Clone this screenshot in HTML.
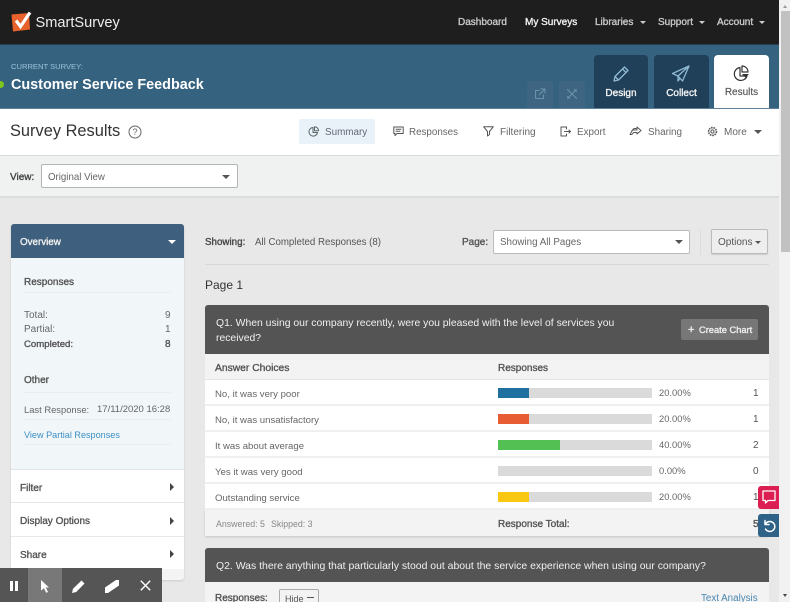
<!DOCTYPE html>
<html><head><meta charset="utf-8"><style>
html,body{margin:0;padding:0;width:790px;height:602px;overflow:hidden;background:#e8e8e8}
body{position:relative;font-family:"Liberation Sans",sans-serif;font-size:10px;color:#555}
div,span.a,svg{position:absolute}
.t{position:absolute;white-space:nowrap;line-height:14px;transform:translateY(1px)}
.t.n{transform:none}
.b{font-weight:normal;-webkit-text-stroke:.35px}
.tri{position:absolute;width:0;height:0;border-left:4px solid transparent;border-right:4px solid transparent;border-top:4px solid #555}
.rtri{position:absolute;width:0;height:0;border-top:4px solid transparent;border-bottom:4px solid transparent;border-left:4px solid #444}
.row{position:absolute;left:205px;width:564px;height:24px;background:#fff;border-bottom:2px solid #f0f0f0}
.bar{position:absolute;left:498px;width:154px;height:10px;background:#dadada}
.fill{position:absolute;left:498px;height:10px}
.ic{fill:none;stroke-linecap:round;stroke-linejoin:round}
</style></head><body>
<!-- nav -->
<div style="left:0;top:0;width:779px;height:44px;background:#1e1e1e"></div>
<div style="left:0;top:44px;width:779px;height:1px;background:#2a3f4e"></div>
<svg style="left:10px;top:11px" width="22" height="22" viewBox="0 0 22 22"><path d="M1.500 3.500L19 2 20 18.500 3 20.500Z" fill="#e8622c"/><path d="M6 9.500L10.500 15.500 20 1.500" fill="none" stroke="#fff" stroke-width="3.200"/></svg>
<div class="t n" style="left:35.500px;top:14px;font-size:14.600px;line-height:18px;color:#eee">SmartSurvey</div>
<div class="t b" style="left:458px;top:15px;font-size:10px;color:#c8c8c8">Dashboard</div>
<div class="t b" style="left:525px;top:15px;font-size:10px;color:#f2f2f2">My Surveys</div>
<div class="t b" style="left:595px;top:15px;font-size:10px;color:#c8c8c8">Libraries</div>
<div class="tri" style="left:640px;top:21px;border-top:3px solid #ccc;border-left-width:3px;border-right-width:3px"></div>
<div class="t b" style="left:658px;top:15px;font-size:10px;color:#c8c8c8">Support</div>
<div class="tri" style="left:699px;top:21px;border-top:3px solid #ccc;border-left-width:3px;border-right-width:3px"></div>
<div class="t b" style="left:717px;top:15px;font-size:10px;color:#c8c8c8">Account</div>
<div class="tri" style="left:759px;top:21px;border-top:3px solid #ccc;border-left-width:3px;border-right-width:3px"></div>
<!-- header -->
<div style="left:0;top:45px;width:779px;height:63px;background:#35627f"></div>
<div class="t n" style="left:11px;top:60px;font-size:7.600px;color:#9cc3dc">CURRENT SURVEY:</div>
<div class="t" style="left:11px;top:75px;font-weight:bold;font-size:14.400px;line-height:18px;color:#fff">Customer Service Feedback</div>
<div style="left:-3px;top:81px;width:7px;height:7px;border-radius:50%;background:#7ec51e"></div>
<div style="left:527px;top:81px;width:26px;height:27px;background:#3e6682;border-radius:3px 3px 0 0"></div>
<div style="left:559px;top:81px;width:26px;height:27px;background:#3e6682;border-radius:3px 3px 0 0"></div>
<svg style="left:534px;top:88px" width="12" height="12" viewBox="0 0 12 12"><path class="ic" stroke="#6d93ab" d="M9.500 7v3.500h-8v-8H5M7 1h4v4M11 1L5.500 6.500"/></svg>
<svg style="left:566px;top:88px" width="12" height="12" viewBox="0 0 12 12"><path class="ic" stroke="#6d93ab" d="M1.500 1.500L10.500 10.500M10.500 1.500L1.500 10.500M8.500 1.500l2 2M1.500 8.500l2 2"/></svg>
<div style="left:594px;top:55px;width:54px;height:53px;background:#204059;border-radius:4px 4px 0 0"></div>
<div style="left:654px;top:55px;width:55px;height:53px;background:#204059;border-radius:4px 4px 0 0"></div>
<div style="left:714px;top:55px;width:55px;height:54px;background:#fff;border-radius:4px 4px 0 0"></div>
<svg style="left:612px;top:65px" width="18" height="18" viewBox="0 0 18 18"><path class="ic" stroke="#8fb9d3" stroke-width="1.300" d="M2 16l1-4.500L12.500 2l3.500 3.500L6.500 15ZM10.500 4l3.500 3.500M3 11.500L6.500 15"/></svg>
<svg style="left:671px;top:64px" width="20" height="19" viewBox="0 0 20 19"><path class="ic" stroke="#8fb9d3" stroke-width="1.300" d="M18 2L1.500 9.500 7 12l4.500 5L18 2ZM18 2L7 12v5l2-2.500"/></svg>
<svg style="left:732px;top:65px" width="18" height="17" viewBox="0 0 18 17"><path class="ic" stroke="#333" stroke-width="1.200" d="M8 2.500A6.500 6.500 0 1 0 15 11H8ZM10 1a6 6 0 0 1 6 6h-6Z"/><path d="M10 9h7l-3.500 3.500Z" fill="#333"/></svg>
<div class="t b" style="left:594px;top:86px;width:54px;text-align:center;font-size:10px;color:#f3f3f3">Design</div>
<div class="t b" style="left:654px;top:86px;width:55px;text-align:center;font-size:10px;color:#f3f3f3">Collect</div>
<div class="t" style="left:714px;top:85px;width:55px;text-align:center;font-size:10px;color:#555;-webkit-text-stroke:.15px">Results</div>
<!-- subheader -->
<div style="left:0;top:108px;width:779px;height:47px;background:#fff;border-top:1px solid #5d7f97;box-sizing:border-box"></div>
<div style="left:0;top:155px;width:779px;height:1px;background:#d8d8d8"></div>
<div class="t n" style="left:10px;top:122px;font-size:16.400px;line-height:19px;color:#333">Survey Results</div>
<svg style="left:128px;top:125px" width="14" height="14" viewBox="0 0 14 14"><circle cx="7" cy="7" r="6" fill="none" stroke="#666"/><text x="7" y="10" text-anchor="middle" font-size="9" fill="#666" font-family="Liberation Sans">?</text></svg>
<div style="left:299px;top:119px;width:76px;height:25px;background:#e9f2f8;border-radius:2px"></div>
<svg style="left:308px;top:126px" width="11" height="11" viewBox="0 0 11 11"><path class="ic" stroke="#566" d="M5 1.500A4.300 4.300 0 1 0 9.500 6.500H5ZM6.500.7a4 4 0 0 1 4 4h-4Z"/></svg>
<div class="t" style="left:325px;top:125px;font-size:9.900px;color:#667">Summary</div>
<svg style="left:393px;top:126px" width="11" height="11" viewBox="0 0 11 11"><path class="ic" stroke="#555" d="M.8 1h9.400v6.500H4l-2 2v-2H.8ZM3 3.200h5M3 5.200h4"/></svg>
<div class="t" style="left:409px;top:125px;font-size:9.800px;color:#666">Responses</div>
<svg style="left:483px;top:126px" width="11" height="11" viewBox="0 0 11 11"><path class="ic" stroke="#555" d="M.7.8h9.600L6.500 5.500v3L4.500 10V5.500Z"/></svg>
<div class="t" style="left:500px;top:125px;font-size:10px;color:#666">Filtering</div>
<svg style="left:560px;top:126px" width="12" height="11" viewBox="0 0 12 11"><path class="ic" stroke="#555" d="M6.500 3V1H1v9h5.500V8M4.500 5.500h6M9 4l1.500 1.500L9 7"/></svg>
<div class="t" style="left:577px;top:125px;font-size:9.900px;color:#666">Export</div>
<svg style="left:629px;top:126px" width="13" height="11" viewBox="0 0 13 11"><path class="ic" stroke="#555" d="M8 1l4 3.500L8 8V6.500H4.500L3 8.500H1L3.500 4H8ZM3 4.500L5 2.500h2"/></svg>
<div class="t" style="left:648px;top:125px;font-size:9.900px;color:#666">Sharing</div>
<svg style="left:707px;top:126px" width="11" height="11" viewBox="0 0 11 11"><circle cx="5.500" cy="5.500" r="1.600" fill="none" stroke="#555"/><circle cx="5.500" cy="5.500" r="3.900" fill="none" stroke="#555" stroke-width="1.600" stroke-dasharray="1.600 .8"/></svg>
<div class="t" style="left:724px;top:125px;font-size:10px;color:#666">More</div>
<div class="tri" style="left:754px;top:130px"></div>
<!-- view bar -->
<div style="left:0;top:156px;width:779px;height:40px;background:#f0f1f1"></div>
<div style="left:0;top:196px;width:779px;height:2px;background:#dcdcdc"></div>
<div class="t b" style="left:10px;top:170px;font-size:10px;color:#444">View:</div>
<div style="left:41px;top:164px;width:197px;height:24px;box-sizing:border-box;background:#fff;border:1px solid #b5b5b5;border-radius:2px"></div>
<div class="t" style="left:48px;top:170px;font-size:9.700px;color:#666">Original View</div>
<div class="tri" style="left:222px;top:175px"></div>
<!-- sidebar -->
<div style="left:11px;top:224px;width:173px;height:356px;background:#f4f4f4;border-radius:3px;box-shadow:0 1px 2px #ccc"></div>
<div style="left:11px;top:469px;width:173px;height:100px;background:#fff"></div>
<div style="left:11px;top:224px;width:173px;height:34px;background:#3e5f7d;border-radius:3px 3px 0 0"></div>
<div class="t b" style="left:20px;top:235px;font-size:9.800px;color:#f0f0f0">Overview</div>
<div class="tri" style="left:168px;top:240px;border-top-color:#fff"></div>
<div style="left:11px;top:258px;width:173px;height:211px;background:#f1f6f9;border-bottom:1px solid #dde5ea"></div>
<div class="t b" style="left:24px;top:275px;font-size:10px;color:#555">Responses</div>
<div style="left:24px;top:292px;width:147px;height:1px;background:#e9eef1"></div>
<div class="t" style="left:24px;top:308px;color:#666;font-size:10px">Total:</div><div class="t" style="left:165px;top:308px;color:#666;font-size:10px">9</div>
<div class="t" style="left:24px;top:322px;color:#666;font-size:10px">Partial:</div><div class="t" style="left:165px;top:322px;color:#666;font-size:10px">1</div>
<div class="t b" style="left:24px;top:337px;color:#555;font-size:9.600px">Completed:</div><div class="t b" style="left:165px;top:337px;color:#555;font-size:10px">8</div>
<div class="t b n" style="left:24px;top:374px;font-size:10px;color:#555">Other</div>
<div style="left:24px;top:392px;width:147px;height:1px;background:#e9eef1"></div>
<div class="t" style="left:24px;top:402px;color:#666;font-size:9.400px">Last Response:</div>
<div class="t" style="left:97px;top:402px;color:#666;font-size:9.500px">17/11/2020 16:28</div>
<div style="left:24px;top:419px;width:147px;height:1px;background:#e9eef1"></div>
<div class="t" style="left:24px;top:427px;color:#3b8fc4;font-size:9.100px">View Partial Responses</div>
<div style="left:24px;top:444px;width:147px;height:1px;background:#e9eef1"></div>
<div class="t b" style="left:20px;top:481px;font-size:10px;color:#555">Filter</div><div class="rtri" style="left:170px;top:483px"></div>
<div style="left:11px;top:502px;width:173px;height:1px;background:#e8e8e8"></div>
<div class="t b" style="left:20px;top:514px;font-size:10px;color:#555">Display Options</div><div class="rtri" style="left:170px;top:517px"></div>
<div style="left:11px;top:536px;width:173px;height:1px;background:#e8e8e8"></div>
<div class="t b" style="left:20px;top:548px;font-size:10px;color:#555">Share</div><div class="rtri" style="left:170px;top:550px"></div>
<!-- showing -->
<div class="t b" style="left:205px;top:235px;font-size:9.800px;color:#444">Showing:</div>
<div class="t" style="left:255px;top:235px;font-size:9.700px;color:#555">All Completed Responses (8)</div>
<div class="t b" style="left:462px;top:235px;font-size:10px;color:#555">Page:</div>
<div style="left:493px;top:230px;width:197px;height:24px;box-sizing:border-box;background:#fff;border:1px solid #bbb;border-radius:2px"></div>
<div class="t" style="left:500px;top:235px;font-size:9.800px;color:#666">Showing All Pages</div>
<div class="tri" style="left:675px;top:240px"></div>
<div style="left:700px;top:229px;width:1px;height:26px;background:#ddd"></div>
<div style="left:711px;top:229px;width:57px;height:25px;box-sizing:border-box;background:#eee;border:1px solid #bbb;border-radius:2px;box-shadow:0 1px 1px #ccc"></div>
<div class="t" style="left:718px;top:235px;font-size:10px;color:#555">Options</div>
<div class="tri" style="left:755px;top:241px;border-left-width:3px;border-right-width:3px;border-top-width:3px"></div>
<div style="left:205px;top:264px;width:564px;height:1px;background:#d8d8d8"></div>
<div class="t n" style="left:205px;top:278px;font-size:12px;color:#333">Page 1</div>
<!-- Q1 -->
<div style="left:205px;top:305px;width:564px;height:49px;background:#545454;border-radius:3px 3px 0 0"></div>
<div class="t" style="left:216px;top:316px;font-size:10.400px;color:#f0f0f0">Q1. When using our company recently, were you pleased with the level of services you</div>
<div class="t" style="left:216px;top:331px;font-size:10.400px;color:#f0f0f0">received?</div>
<div style="left:681px;top:319px;width:77px;height:21px;background:#777;border-radius:2px"></div>
<div class="t b n" style="left:688px;top:323px;font-size:11px;color:#eee">+</div>
<div class="t b n" style="left:699px;top:323px;font-size:9.300px;color:#eee">Create Chart</div>
<div style="left:205px;top:354px;width:564px;height:26px;background:#f3f3f3;border-bottom:1px solid #e5e5e5;box-sizing:border-box"></div>
<div class="t b" style="left:215px;top:361px;font-size:10.300px;color:#555">Answer Choices</div>
<div class="t b" style="left:498px;top:361px;font-size:10px;color:#555">Responses</div>
<div class="row" style="top:380px"></div>
<div class="row" style="top:406px"></div>
<div class="row" style="top:432px"></div>
<div class="row" style="top:458px"></div>
<div class="row" style="top:484px"></div>
<div class="t" style="left:215px;top:387px;font-size:9.600px;color:#666">No, it was very poor</div>
<div class="t" style="left:215px;top:413px;font-size:9.600px;color:#666">No, it was unsatisfactory</div>
<div class="t" style="left:215px;top:439px;font-size:9.600px;color:#666">It was about average</div>
<div class="t" style="left:215px;top:465px;font-size:9.600px;color:#666">Yes it was very good</div>
<div class="t" style="left:215px;top:491px;font-size:9.600px;color:#666">Outstanding service</div>
<div class="bar" style="top:388px"></div><div class="fill" style="top:388px;width:31px;background:#20709f"></div>
<div class="bar" style="top:414px"></div><div class="fill" style="top:414px;width:31px;background:#e85c33"></div>
<div class="bar" style="top:440px"></div><div class="fill" style="top:440px;width:62px;background:#52c052"></div>
<div class="bar" style="top:466px"></div>
<div class="bar" style="top:492px"></div><div class="fill" style="top:492px;width:31px;background:#f9c70f"></div>
<div class="t n" style="left:659px;top:386px;font-size:9.400px;color:#666">20.00%</div><div class="t" style="left:753px;top:386px;font-size:10px;color:#555">1</div>
<div class="t n" style="left:659px;top:412px;font-size:9.400px;color:#666">20.00%</div><div class="t" style="left:753px;top:412px;font-size:10px;color:#555">1</div>
<div class="t n" style="left:659px;top:438px;font-size:9.400px;color:#666">40.00%</div><div class="t" style="left:753px;top:438px;font-size:10px;color:#555">2</div>
<div class="t n" style="left:659px;top:464px;font-size:9.400px;color:#666">0.00%</div><div class="t" style="left:753px;top:464px;font-size:10px;color:#555">0</div>
<div class="t n" style="left:659px;top:490px;font-size:9.400px;color:#666">20.00%</div><div class="t" style="left:753px;top:490px;font-size:10px;color:#555">1</div>
<div style="left:205px;top:510px;width:564px;height:26px;background:#f3f3f3;box-shadow:0 1px 2px #c4c4c4"></div>
<div class="t n" style="left:216px;top:517px;font-size:8.800px;color:#888">Answered: 5</div>
<div class="t n" style="left:271px;top:517px;font-size:8.800px;color:#888">Skipped: 3</div>
<div class="t b" style="left:498px;top:517px;font-size:10px;color:#555">Response Total:</div>
<div class="t b" style="left:753px;top:517px;font-size:10px;color:#555">5</div>
<!-- Q2 -->
<div style="left:205px;top:548px;width:564px;height:34px;background:#545454;border-radius:3px 3px 0 0"></div>
<div class="t" style="left:216px;top:559px;font-size:10.450px;color:#f0f0f0">Q2. Was there anything that particularly stood out about the service experience when using our company?</div>
<div style="left:205px;top:582px;width:564px;height:20px;background:#f3f3f3"></div>
<div class="t b n" style="left:215px;top:592px;font-size:10px;color:#555">Responses:</div>
<div style="left:279px;top:589px;width:40px;height:20px;box-sizing:border-box;background:#f3f3f3;border:1px solid #aaa;border-radius:2px"></div>
<div class="t n" style="left:285px;top:592px;font-size:9px;color:#555">Hide</div>
<div style="left:307px;top:597px;width:7px;height:1px;background:#555"></div>
<div class="t n" style="left:701px;top:592px;font-size:9.800px;color:#4a86b0">Text Analysis</div>
<!-- floating -->
<div style="left:758px;top:486px;width:21px;height:23px;background:#dc1f52;border-radius:3px 0 0 3px"></div>
<svg style="left:762px;top:490px" width="14" height="15" viewBox="0 0 14 15"><path class="ic" stroke="#fff" stroke-width="1.300" d="M1 1h12v9.500H6L3.500 13v-2.500H1Z"/></svg>
<div style="left:758px;top:514px;width:21px;height:23px;background:#2e6286;border-radius:3px 0 0 3px"></div>
<svg style="left:762px;top:518px" width="14" height="15" viewBox="0 0 14 15"><path class="ic" stroke="#fff" stroke-width="1.500" d="M3 2.500V6.500H7M3.300 6.300A5 5 0 1 1 3.500 11"/></svg>
<!-- toolbar -->
<div style="left:0;top:568px;width:162px;height:34px;background:#555"></div>
<div style="left:28px;top:568px;width:34px;height:34px;background:#787878"></div>
<div style="left:10px;top:581px;width:3px;height:10px;background:#fff"></div>
<div style="left:15px;top:581px;width:3px;height:10px;background:#fff"></div>
<svg style="left:39px;top:579px" width="12" height="15" viewBox="0 0 12 15"><path d="M2 1l8 7.500H6.800L9 13l-1.800.8L5 9.300 2 11.500Z" fill="#fff"/></svg>
<svg style="left:71px;top:579px" width="15" height="15" viewBox="0 0 15 15"><path d="M1 14l1-4.200L10.500 1.500l3 3L5.200 13Z" fill="#fff"/></svg>
<svg style="left:104px;top:579px" width="16" height="15" viewBox="0 0 16 15"><path d="M1 8.500L12 1h3v5.500L4 14H1Z" fill="#fff"/></svg>
<svg style="left:140px;top:580px" width="11" height="11" viewBox="0 0 11 11"><path d="M.8.800L10.200 10.200M10.200.800L.8 10.200" stroke="#fff" stroke-width="1.400"/></svg>
<!-- scrollbar -->
<div style="left:779px;top:0;width:11px;height:602px;background:#f1f1f1"></div>
<div style="left:781px;top:11px;width:9px;height:241px;background:#c1c1c1"></div>
<div class="tri" style="left:783px;top:5px;border-top:0;border-bottom:3px solid #999;border-left-width:2.500px;border-right-width:2.500px"></div>
<div class="tri" style="left:783px;top:594px;border-top:3px solid #444;border-left-width:2.500px;border-right-width:2.500px"></div>
</body></html>
